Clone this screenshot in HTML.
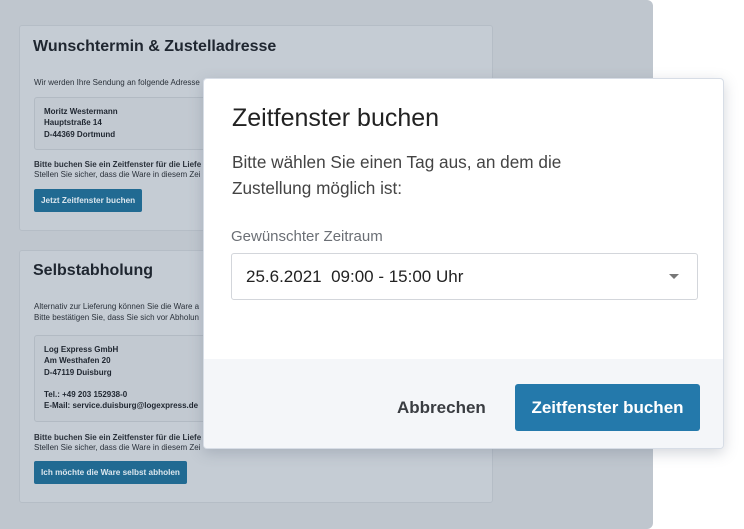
<!DOCTYPE html>
<html><head><meta charset="utf-8"><style>
*{box-sizing:border-box;margin:0;padding:0}
body{width:744px;height:529px;background:#fff;font-family:"Liberation Sans",sans-serif;position:relative;overflow:hidden}
.bg{position:absolute;left:0;top:0;width:653px;height:529px;background:#bfc6ce;border-radius:0 6px 6px 0}
.card{position:absolute;left:19px;width:474px;background:#c5ccd4;border:1px solid #b5bdc6;border-radius:3px;color:#1f2630}
.card h2{position:absolute;left:13px;font-size:16px;font-weight:bold}
.sm{position:absolute;left:14px;font-size:8px;line-height:11px;color:#2a313a;white-space:nowrap}
.box{position:absolute;left:14px;width:200px;border:1px solid #b2bac3;border-radius:3px;background:#c2c9d1;font-size:8px;font-weight:bold;line-height:11.3px;padding:8px 9px;color:#1f2630}
.btn{position:absolute;left:14px;height:23px;background:#216a92;color:#dbe6ee;font-size:8.2px;font-weight:bold;border-radius:2px;padding:0 7px;line-height:23px}
.modal{position:absolute;left:203px;top:78px;width:521px;height:371px;background:#fff;border:1px solid #d7dde6;border-radius:4px;box-shadow:0 4px 14px rgba(80,90,110,.25);overflow:hidden}
.foot{position:absolute;left:0;top:280px;width:100%;height:91px;background:#f4f6f9}
</style></head><body>
<div class="bg"></div>
<div class="card" style="top:25px;height:206px">
<h2 style="top:12px">Wunschtermin &amp; Zustelladresse</h2>
<div class="sm" style="top:51px">Wir werden Ihre Sendung an folgende Adresse</div>
<div class="box" style="top:71px;height:53px">Moritz Westermann<br>Hauptstraße 14<br>D-44369 Dortmund</div>
<div class="sm" style="top:134px;line-height:9.5px"><b>Bitte buchen Sie ein Zeitfenster für die Liefe</b><br>Stellen Sie sicher, dass die Ware in diesem Zei</div>
<div class="btn" style="top:163px">Jetzt Zeitfenster buchen</div>
</div>
<div class="card" style="top:250px;height:253px">
<h2 style="top:11px">Selbstabholung</h2>
<div class="sm" style="top:50px">Alternativ zur Lieferung können Sie die Ware a<br>Bitte bestätigen Sie, dass Sie sich vor Abholun</div>
<div class="box" style="top:84px;height:87px">Log Express GmbH<br>Am Westhafen 20<br>D-47119 Duisburg<br><br>Tel.: +49 203 152938-0<br>E-Mail: service.duisburg@logexpress.de</div>
<div class="sm" style="top:182px;line-height:9.5px"><b>Bitte buchen Sie ein Zeitfenster für die Liefe</b><br>Stellen Sie sicher, dass die Ware in diesem Zei</div>
<div class="btn" style="top:210px">Ich möchte die Ware selbst abholen</div>
</div>
<div class="modal">
<div style="position:absolute;left:28px;top:25px;font-size:25px;color:#222">Zeitfenster buchen</div>
<div style="position:absolute;left:28px;top:70px;font-size:17.2px;line-height:26px;color:#444">Bitte wählen Sie einen Tag aus, an dem die<br>Zustellung möglich ist:</div>
<div style="position:absolute;left:27px;top:149px;font-size:15px;color:#6b6f75">Gewünschter Zeitraum</div>
<div style="position:absolute;left:27px;top:174px;width:467px;height:47px;border:1px solid #d3d6db;border-radius:3px;font-size:17px;line-height:45px;padding-left:14px;color:#222">25.6.2021&nbsp; 09:00 - 15:00 Uhr
<div style="position:absolute;right:18px;top:20px;width:0;height:0;border-left:5px solid transparent;border-right:5px solid transparent;border-top:5px solid #777"></div></div>
<div class="foot">
<div style="position:absolute;left:193px;top:39px;font-size:17px;font-weight:bold;color:#3a3d42">Abbrechen</div>
<div style="position:absolute;left:311px;top:25px;width:185px;height:47px;background:#2479ab;border-radius:3px;color:#fff;font-size:17px;font-weight:bold;text-align:center;line-height:47px">Zeitfenster buchen</div>
</div>
</div>
</body></html>
